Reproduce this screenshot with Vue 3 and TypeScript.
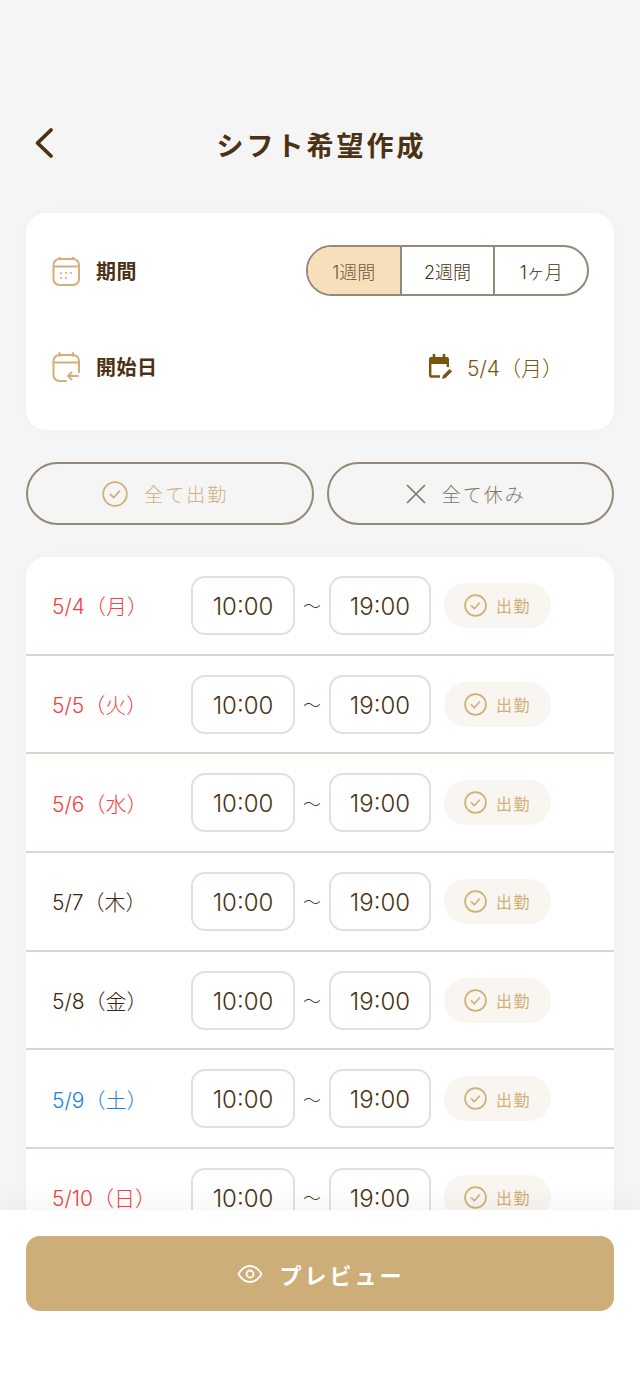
<script setup lang="ts">
type Day = { label: string; tone: string };

const days: Day[] = [
  { label: "5/4（月）", tone: "red" },
  { label: "5/5（火）", tone: "red" },
  { label: "5/6（水）", tone: "red" },
  { label: "5/7（木）", tone: "dark" },
  { label: "5/8（金）", tone: "dark" },
  { label: "5/9（土）", tone: "blue" },
  { label: "5/10（日）", tone: "red" },
];
const periods = ["1週間", "2週間", "1ヶ月"];
</script>

<template>
  <div class="page">
    <header class="header">
      <svg class="back" width="20" height="32" viewBox="0 0 20 32" fill="none">
        <path d="M17 3 3.500 16 17 29" stroke="#4a3212" stroke-width="3.800" stroke-linecap="round" stroke-linejoin="round" />
      </svg>
      <h1 class="title">シフト希望作成</h1>
    </header>

    <section class="card settings">
      <div class="setting">
        <div class="setting-label">
          <svg width="28" height="30" viewBox="0 0 28 30" fill="none" stroke="#d2b078" stroke-width="2">
            <rect x="1.500" y="3" width="25.500" height="26" rx="6" />
            <path d="M1.500 10.500h25.500M7.500 1v3M21 1v3" />
            <g fill="#d2b078" stroke="none">
              <circle cx="9" cy="17" r="1.100" /><circle cx="14" cy="17" r="1.100" /><circle cx="19" cy="17" r="1.100" />
              <circle cx="9" cy="22" r="1.100" /><circle cx="14" cy="22" r="1.100" />
            </g>
          </svg>
          <span>期間</span>
        </div>
        <div class="segments">
          <div v-for="(p, i) in periods" :key="p" class="segment" :class="{ active: i === 0 }">{{ p }}</div>
        </div>
      </div>
      <div class="setting">
        <div class="setting-label">
          <svg width="28" height="30" viewBox="0 0 28 30" fill="none" stroke="#d2b078" stroke-width="2" stroke-linecap="round" stroke-linejoin="round">
            <path d="M14 29H7.500a6 6 0 0 1-6-6V9a6 6 0 0 1 6-6H21a6 6 0 0 1 6 6v11" />
            <path d="M1.500 10.500H27M7.500 1v3M21 1v3" />
            <path d="M26 24H16M19.500 20.500 16 24l3.500 3.500" />
          </svg>
          <span>開始日</span>
        </div>
        <div class="start-date">
          <svg width="25" height="26" viewBox="0 0 25 26" fill="none">
            <path d="M1 5a2 2 0 0 1 2-2h16a2 2 0 0 1 2 2v5H1z" fill="#7a5510" />
            <path d="M6 .500v4M16 .500v4" stroke="#7a5510" stroke-width="2.600" stroke-linecap="round" />
            <path d="M2.200 9v12.500a1 1 0 0 0 1 1H12M19.800 9v4" stroke="#7a5510" stroke-width="2.400" />
            <path d="M14 25l1-3.500 6.500-6.500 2.500 2.500-6.500 6.500z" fill="#7a5510" />
          </svg>
          <span>5/4（月）</span>
        </div>
      </div>
    </section>

    <div class="bulk">
      <button class="bulk-btn on">
        <svg width="26" height="26" viewBox="0 0 26 26" fill="none" stroke="#d2b078" stroke-width="1.800">
          <circle cx="13" cy="13" r="11.800" />
          <path d="m8.500 13.500 3.200 3.200 5.800-6.500" stroke-linecap="round" stroke-linejoin="round" />
        </svg>
        <span>全て出勤</span>
      </button>
      <button class="bulk-btn off">
        <svg width="20" height="20" viewBox="0 0 20 20" fill="none" stroke="#867561" stroke-width="1.700">
          <path d="M1.500 1.500l17 17M18.500 1.500l-17 17" stroke-linecap="round" />
        </svg>
        <span>全て休み</span>
      </button>
    </div>

    <section class="card list">
      <div v-for="d in days" :key="d.label" class="day">
        <span class="date" :class="d.tone">{{ d.label }}</span>
        <div class="time first">10:00</div>
        <span class="tilde">〜</span>
        <div class="time">19:00</div>
        <div class="chip">
          <svg width="23" height="23" viewBox="0 0 26 26" fill="none" stroke="#d2b078" stroke-width="1.900">
            <circle cx="13" cy="13" r="11.800" />
            <path d="m8.500 13.500 3.200 3.200 5.800-6.500" stroke-linecap="round" stroke-linejoin="round" />
          </svg>
          <span>出勤</span>
        </div>
      </div>
    </section>

    <footer class="footer">
      <button class="preview">
        <svg width="26" height="20" viewBox="0 0 26 20" fill="none" stroke="#fff" stroke-width="1.800">
          <path d="M1.500 10C4.500 4.800 8.500 2 13 2s8.500 2.800 11.500 8c-3 5.200-7 8-11.500 8S4.500 15.200 1.500 10z" stroke-linejoin="round" />
          <circle cx="13" cy="10" r="3.500" />
        </svg>
        <span>プレビュー</span>
      </button>
    </footer>
  </div>
</template>

<style scoped>
.page {
  position: relative;
  height: 1391px;
  overflow: hidden;
  background: #f5f5f5;
  color: #4a3212;
  font-family: Inter, "Noto Sans CJK JP", "Noto Sans", sans-serif;
}

.header {
  position: relative;
  display: flex;
  justify-content: center;
  align-items: center;
  height: 40px;
  margin-top: 127px;
}

.back {
  position: absolute;
  left: 34px;
  top: 0;
}

.title {
  margin: 0;
  padding-left: 3px;
  font-size: 27px;
  font-weight: 700;
  letter-spacing: 3px;
  line-height: 40px;
}

.card {
  margin: 0 26px;
  background: #fff;
  border-radius: 20px;
  box-shadow: 0 0 14px rgba(0, 0, 0, 0.025);
}

.settings {
  display: flex;
  flex-direction: column;
  gap: 45px;
  margin-top: 46px;
  padding: 32px 25px 38px 26px;
}

.setting {
  display: flex;
  align-items: center;
  justify-content: space-between;
  height: 51px;
}

.setting-label {
  display: flex;
  align-items: center;
  gap: 16px;
  font-size: 20px;
  font-weight: 700;
  letter-spacing: 0.500px;
}

.segments {
  display: flex;
  width: 283px;
  height: 51px;
  box-sizing: border-box;
  border: 2px solid #96887a;
  border-radius: 26px;
  overflow: hidden;
}

.segment {
  flex: 1;
  display: flex;
  align-items: center;
  justify-content: center;
  font-size: 18px;
  font-weight: 300;
}

.segment + .segment {
  border-left: 2px solid #96887a;
}

.segment.active {
  background: #f7dfbb;
  color: #6d5a42;
}

.start-date {
  display: flex;
  align-items: center;
  gap: 14px;
  width: 161px;
  color: #7a5510;
  font-size: 21px;
  font-weight: 300;
}

.bulk {
  display: flex;
  gap: 13px;
  margin: 32px 26px;
}

.bulk-btn {
  flex: 1;
  display: flex;
  align-items: center;
  justify-content: center;
  gap: 16px;
  height: 63px;
  padding: 0 9px 0 0;
  background: transparent;
  border: 2px solid #96887a;
  border-radius: 32px;
  font-family: inherit;
  font-size: 19px;
  font-weight: 300;
  letter-spacing: 2px;
}

.bulk-btn.on {
  color: #d2b078;
}

.bulk-btn.off {
  color: #867561;
}

.list {
  height: 760px;
  overflow: hidden;
}

.day {
  display: flex;
  align-items: center;
  box-sizing: border-box;
  height: 98.700px;
  padding-left: 26px;
  border-bottom: 2px solid #ddd6c8;
}

.date {
  width: 139px;
  font-size: 21px;
  font-weight: 300;
}

.date.red {
  color: #f44040;
}

.date.dark {
  color: #3f2808;
}

.date.blue {
  color: #1f80e0;
}

.time {
  display: flex;
  align-items: center;
  justify-content: center;
  box-sizing: border-box;
  width: 102px;
  height: 59px;
  padding-top: 2px;
  background: #fff;
  border: 2px solid #e2e0dd;
  border-radius: 14px;
  font-size: 24px;
  font-weight: 300;
}

.time.first {
  width: 104px;
}

.tilde {
  width: 34px;
  text-align: center;
  font-size: 18px;
  font-weight: 300;
}

.chip {
  display: flex;
  align-items: center;
  gap: 9px;
  box-sizing: border-box;
  width: 107px;
  height: 45px;
  margin-left: 13px;
  padding-left: 20px;
  background: #f9f5f0;
  border-radius: 23px;
  color: #d2b078;
  font-size: 16px;
  font-weight: 400;
  letter-spacing: 1.500px;
}

.footer {
  position: absolute;
  left: 0;
  right: 0;
  bottom: 0;
  height: 181px;
  padding: 26px 26px 0;
  box-sizing: border-box;
  background: #fff;
  box-shadow: 0 -10px 20px rgba(0, 0, 0, 0.035);
}

.preview {
  display: flex;
  align-items: center;
  justify-content: center;
  gap: 16px;
  width: 100%;
  height: 75px;
  padding: 0 0 0 2px;
  background: #cdae78;
  border: none;
  border-radius: 14px;
  color: #fff;
  font-family: inherit;
  font-size: 22px;
  font-weight: 700;
  letter-spacing: 3px;
}
</style>
